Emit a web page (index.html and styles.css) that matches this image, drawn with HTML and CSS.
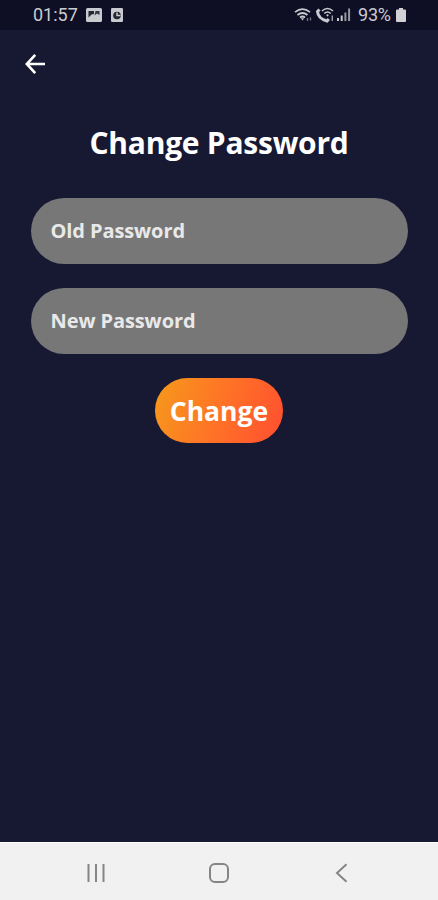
FILE: index.html
```html
<!DOCTYPE html>
<html lang="en">
<head>
    <meta charset="UTF-8">
    <meta name="viewport" content="width=device-width, initial-scale=1.0">
    <title>Change Password</title>
    <link rel="stylesheet" href="styles.css">
</head>
<body>

    <!-- Status bar -->
    <div class="status-bar">
        <span class="time">01:57</span>
        <svg class="picture" width="16" height="14" viewBox="0 0 16 14">
            <rect width="16" height="14" rx="1.500" fill="#c9c9d0"/>
            <path d="M2.500 3H8V6L5.500 6.500L2.500 9.500Z" fill="#242432"/>
            <path d="M9.500 3H13.500V7L11 5.500L8.500 7.500Z" fill="#343442"/>
        </svg>
        <svg class="clock" width="12" height="14" viewBox="0 0 12 14">
            <rect width="12" height="14" rx="1.200" fill="#c9c9d0"/>
            <circle cx="6" cy="7.500" r="3.800" fill="#242432"/>
            <path d="M6 4.500V7.500H9.500" fill="none" stroke="#c9c9d0" stroke-width="1.500"/>
        </svg>
        <svg class="signals" width="58" height="18" viewBox="0 0 58 18" fill="none" stroke="#c9c9d0">
            <!-- wifi -->
            <path d="M1 6.200Q8.500 0 16 6.200M3.500 9Q8.500 5 13.500 9M6 11.500Q8.500 9.500 11 11.500" stroke-width="1.700"/>
            <path d="M6.800 12.200L8.500 14.500L10.200 12.200Z" fill="#c9c9d0" stroke="none"/>
            <path d="M13.500 12V15M16.500 11.500V14.500" stroke="#777783" stroke-width="1.300"/>
            <!-- wifi calling -->
            <path d="M25.500 3.500L23.500 5.500Q24 12.500 33 15L34.800 13" stroke-width="3"/>
            <path d="M28 5Q33.500 0 39 5M30.200 7.500Q33.500 4.500 36.800 7.500" stroke-width="1.600"/>
            <circle cx="33.500" cy="9.300" r="1.100" fill="#c9c9d0" stroke="none"/>
            <path d="M38.200 9.500V15" stroke-width="1.100"/>
            <!-- mobile signal -->
            <path d="M44 12V15M47.700 9.500V15" stroke-width="2"/>
            <path d="M51.400 6.500V15M55.100 2.500V15" stroke="#96969f" stroke-width="2"/>
        </svg>
        <span class="percent">93%</span>
        <svg class="battery" width="10" height="14" viewBox="0 0 10 14">
            <path d="M3 0H7V1.500H9Q10 1.500 10 2.500V13Q10 14 9 14H1Q0 14 0 13V2.500Q0 1.500 1 1.500H3Z" fill="#d2d2d6"/>
        </svg>
    </div>

    <!-- Change password screen -->
    <main class="screen">
        <button class="back" type="button" aria-label="Back">
            <svg width="20" height="20" viewBox="0 0 20 20" fill="none" stroke="#fff" stroke-width="2.600">
                <path d="M10.200 .900L1.800 10L10.200 19.100M2 10H20"/>
            </svg>
        </button>
        <h1>Change Password</h1>
        <form class="password-form">
            <input class="old" type="password" placeholder="Old Password" aria-label="Old Password">
            <input class="new" type="password" placeholder="New Password" aria-label="New Password">
            <button class="submit" type="button">Change</button>
        </form>
    </main>

    <!-- Navigation bar -->
    <nav class="nav-bar">
        <svg width="20" height="20" viewBox="0 0 20 20" fill="none" stroke="#858585" stroke-width="2">
            <path d="M2.500 1V19M10 1V19M17.500 1V19"/>
        </svg>
        <svg width="20" height="20" viewBox="0 0 20 20" fill="none" stroke="#858585" stroke-width="2">
            <rect x="1" y="1" width="18" height="18" rx="5"/>
        </svg>
        <svg width="20" height="20" viewBox="0 0 20 20" fill="none" stroke="#858585" stroke-width="2">
            <path d="M14.500 1.200L5 10L14.500 18.800"/>
        </svg>
    </nav>

</body>
</html>
```
FILE: styles.css
```css
* {
    box-sizing: border-box;
}

body {
    margin: 0;
    height: 100vh;
    display: flex;
    flex-direction: column;
    background-color: #171932;
    color: #ffffff;
    font-family: "Open Sans", sans-serif;
    overflow: hidden;
}

svg {
    display: block;
    flex: none;
}

.status-bar {
    height: 30px;
    display: flex;
    align-items: center;
    padding: 0 32px 0 33px;
    background-color: #0e0f24;
    color: #cbcbd1;
    font-family: Roboto, sans-serif;
    font-size: 18px;
    line-height: 30px;
}

.time {
    width: 53px;
}

.clock {
    margin-left: 9px;
}

.signals {
    margin-left: auto;
}

.percent {
    width: 38px;
    margin-left: 6px;
    letter-spacing: -0.2px;
}

.screen {
    flex: 1;
    padding: 24px 30.5px 0;
}

.back {
    display: block;
    padding: 0;
    margin-left: -6px;
    border: none;
    background: none;
}

h1 {
    margin: 49px 0 35px;
    text-align: center;
    font-size: 30px;
    font-weight: 700;
    line-height: 40px;
    letter-spacing: -0.25px;
    white-space: nowrap;
}

.password-form {
    display: flex;
    flex-direction: column;
    align-items: center;
    gap: 24.5px;
}

.password-form input {
    width: 100%;
    height: 65.5px;
    padding: 0 20px 1px;
    border: none;
    border-radius: 33px;
    background-color: #777777;
    color: #e9e9e9;
    font-family: inherit;
    font-size: 20px;
    font-weight: 700;
    letter-spacing: -0.1px;
}

.password-form input::placeholder {
    color: #e9e9e9;
    opacity: 1;
}

.submit {
    width: 128px;
    height: 65px;
    padding: 0;
    border: none;
    border-radius: 33px;
    background: linear-gradient(110deg, #f59a1b, #ff7326 50%, #ff4e31);
    color: #ffffff;
    font-family: inherit;
    font-size: 26.5px;
    font-weight: 700;
}

.nav-bar {
    height: 58px;
    display: flex;
    justify-content: space-between;
    align-items: center;
    padding: 2px 86px 0;
    border-top: 1px solid #ffffff;
    background-color: #f1f1f1;
}
```
